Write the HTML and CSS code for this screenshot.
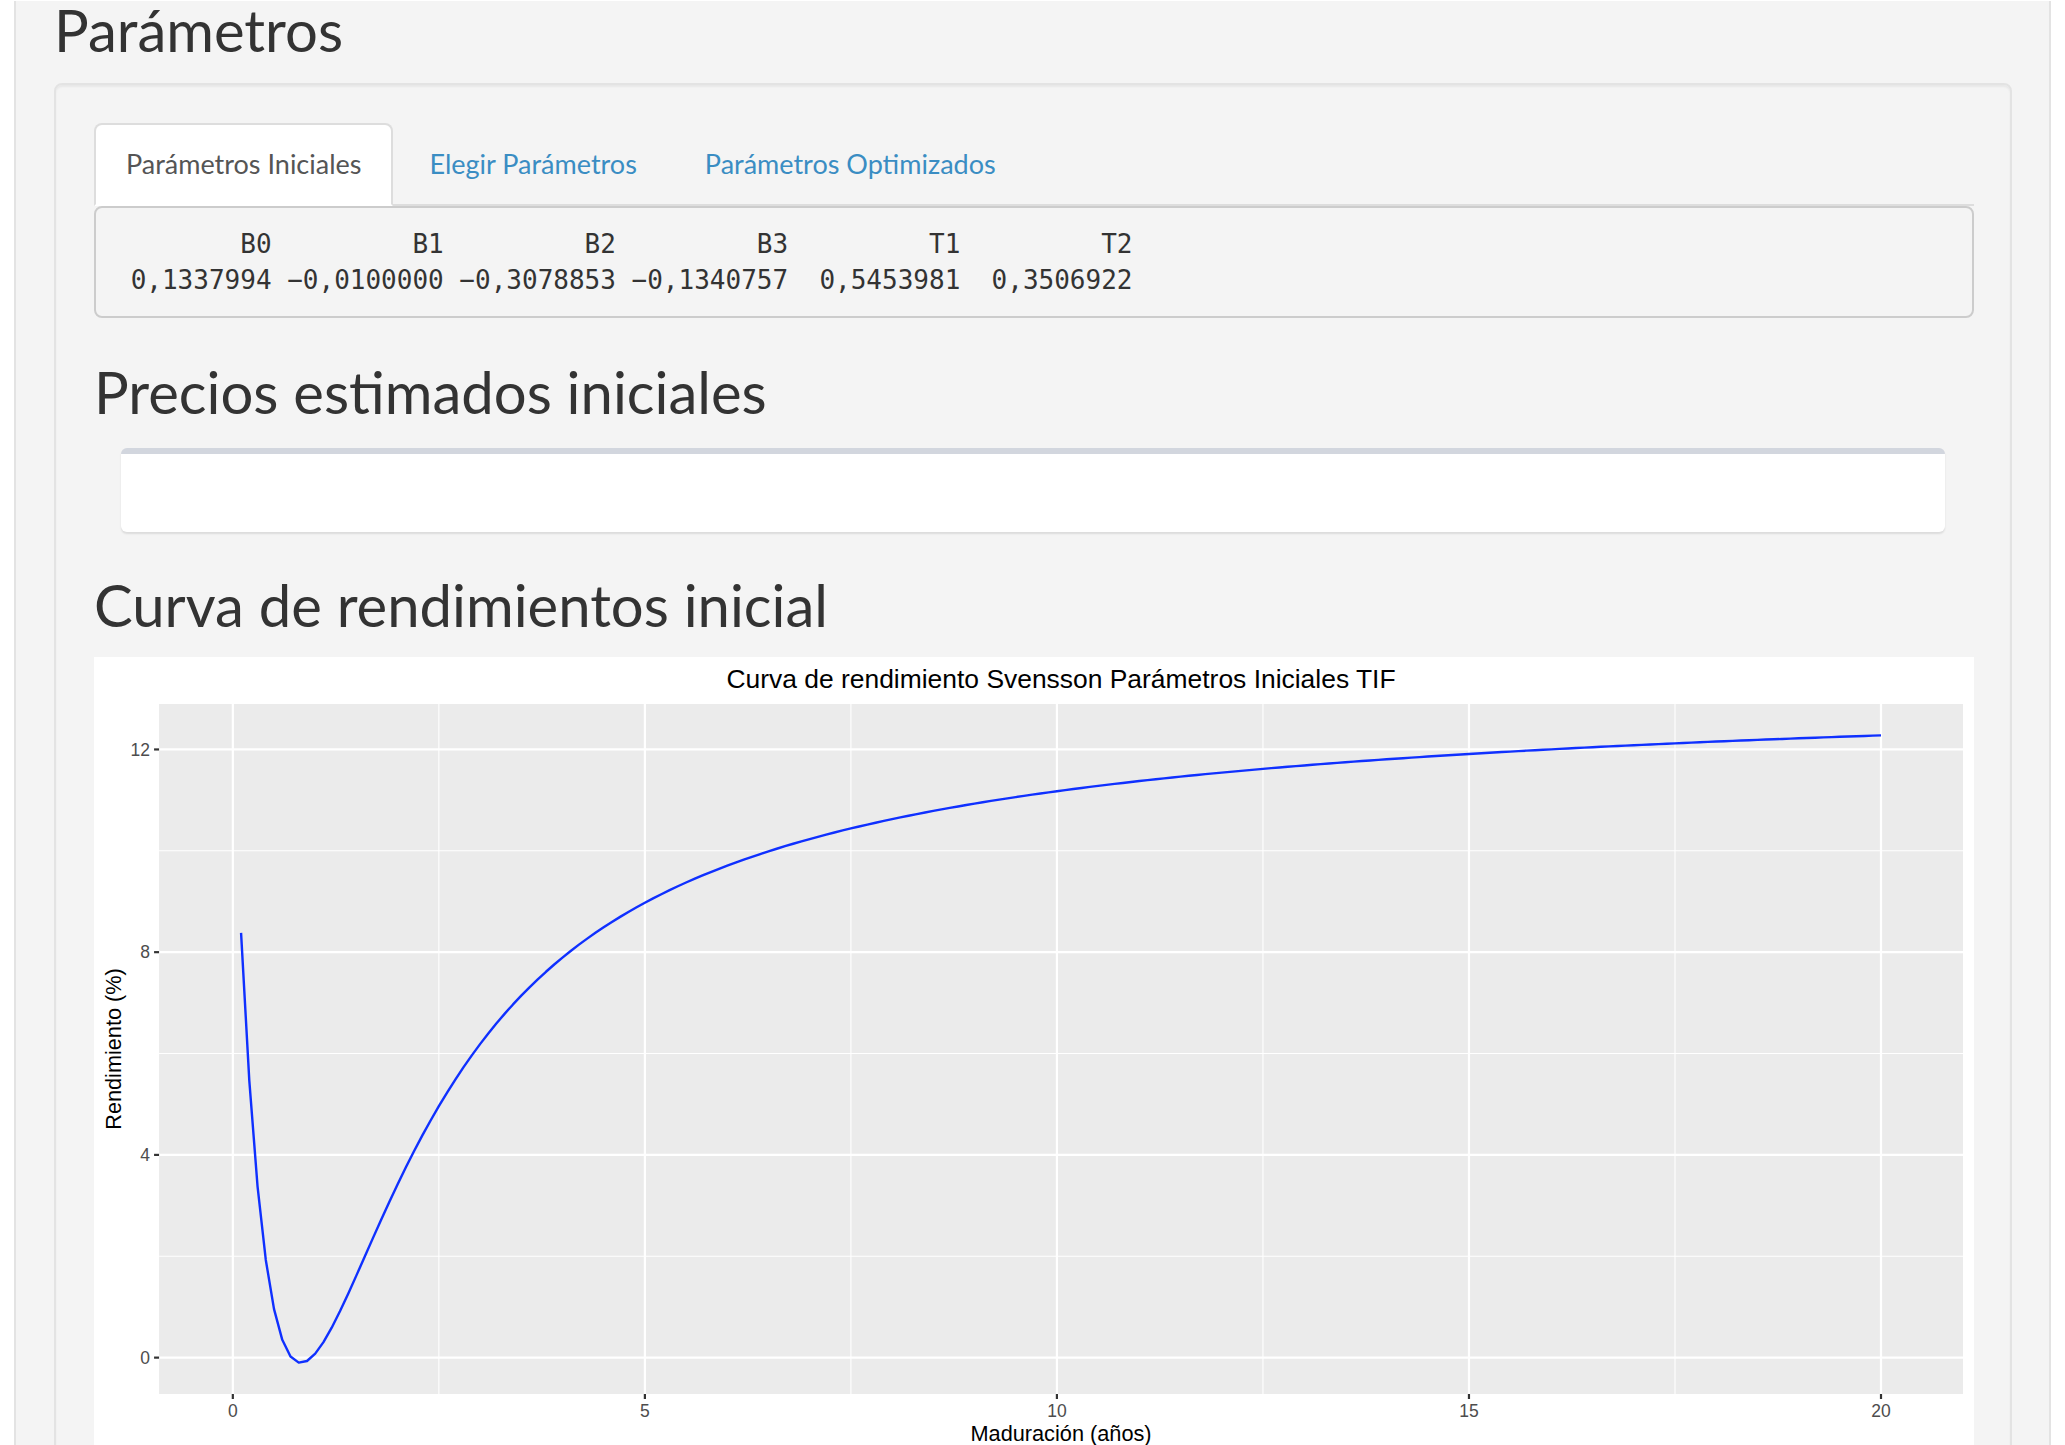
FILE: index.html
```html
<!DOCTYPE html>
<html lang="es">
<head>
<meta charset="utf-8">
<title>Parámetros</title>
<link rel="stylesheet" href="styles.css">
</head>
<body>
<div class="outer-well">
  <h1 class="page-title">Parámetros</h1>
  <div class="well">
    <ul class="nav-tabs">
      <li class="tab active"><a class="tab-link">Parámetros Iniciales</a></li>
      <li class="tab"><a class="tab-link">Elegir Parámetros</a></li>
      <li class="tab"><a class="tab-link">Parámetros Optimizados</a></li>
    </ul>
    <pre class="params">        B0         B1         B2         B3         T1         T2
 0,1337994 −0,0100000 −0,3078853 −0,1340757  0,5453981  0,3506922</pre>
    <h3 class="section-title">Precios estimados iniciales</h3>
    <div class="box"></div>
    <h3 class="section-title section-title-plot">Curva de rendimientos inicial</h3>
    <div class="plot">
      <svg class="plot-svg" viewBox="0 0 1878 800" preserveAspectRatio="none">
        <rect x="0" y="0" width="1878" height="800" fill="#ffffff"/>
        <rect x="65" y="47" width="1802" height="690" fill="#ebebeb"/>
        <g stroke="#ffffff" stroke-width="1.1">
          <line x1="65" x2="1867" y1="599.27" y2="599.27"/>
          <line x1="65" x2="1867" y1="396.54" y2="396.54"/>
          <line x1="65" x2="1867" y1="193.81" y2="193.81"/>
          <line x1="344.48" x2="344.48" y1="47" y2="737"/>
          <line x1="756.09" x2="756.09" y1="47" y2="737"/>
          <line x1="1167.70" x2="1167.70" y1="47" y2="737"/>
          <line x1="1579.30" x2="1579.30" y1="47" y2="737"/>
        </g>
        <g stroke="#ffffff" stroke-width="2.2">
          <line x1="65" x2="1867" y1="700.63" y2="700.63"/>
          <line x1="65" x2="1867" y1="497.90" y2="497.90"/>
          <line x1="65" x2="1867" y1="295.17" y2="295.17"/>
          <line x1="65" x2="1867" y1="92.45" y2="92.45"/>
          <line x1="138.68" x2="138.68" y1="47" y2="737"/>
          <line x1="550.29" x2="550.29" y1="47" y2="737"/>
          <line x1="961.89" x2="961.89" y1="47" y2="737"/>
          <line x1="1373.50" x2="1373.50" y1="47" y2="737"/>
          <line x1="1785.10" x2="1785.10" y1="47" y2="737"/>
        </g>
        <path id="curve" fill="none" stroke="#0f30ff" stroke-width="2.4" stroke-linejoin="round" d=""/>
        <g stroke="#333333" stroke-width="2.2">
          <line x1="60" x2="65" y1="700.63" y2="700.63"/>
          <line x1="60" x2="65" y1="497.90" y2="497.90"/>
          <line x1="60" x2="65" y1="295.17" y2="295.17"/>
          <line x1="60" x2="65" y1="92.45" y2="92.45"/>
          <line x1="138.68" x2="138.68" y1="737" y2="742"/>
          <line x1="550.29" x2="550.29" y1="737" y2="742"/>
          <line x1="961.89" x2="961.89" y1="737" y2="742"/>
          <line x1="1373.50" x2="1373.50" y1="737" y2="742"/>
          <line x1="1785.10" x2="1785.10" y1="737" y2="742"/>
        </g>
        <g class="axis-text" text-anchor="end">
          <text x="56" y="98.6">12</text>
          <text x="56" y="301.3">8</text>
          <text x="56" y="504">4</text>
          <text x="56" y="706.8">0</text>
        </g>
        <g class="axis-text" text-anchor="middle">
          <text x="138.68" y="760">0</text>
          <text x="550.29" y="760">5</text>
          <text x="961.89" y="760">10</text>
          <text x="1373.50" y="760">15</text>
          <text x="1785.10" y="760">20</text>
        </g>
        <text class="plot-title" x="966" y="31" text-anchor="middle">Curva de rendimiento Svensson Parámetros Iniciales TIF</text>
        <text class="axis-title" x="966" y="784" text-anchor="middle">Maduración (años)</text>
        <text class="axis-title" transform="translate(27 392) rotate(-90)" text-anchor="middle">Rendimiento (%)</text>
      </svg>
    </div>
  </div>
</div>
<script src="script.js"></script>
</body>
</html>
```

FILE: styles.css
```css
* {
  box-sizing: border-box;
}

html,
body {
  margin: 0;
  padding: 0;
}

body {
  background: #ffffff;
  font-family: Lato, "Open Sans", sans-serif;
  color: #333333;
}

.outer-well {
  margin: 0 14px;
  min-height: 1445px;
  padding: 0 37px 40px 38px;
  background: #f4f4f4;
  border: 2px solid #e3e3e3;
  border-top: none;
}

.page-title {
  margin: 1px 0 25px;
  font-size: 58px;
  line-height: 57px;
  font-weight: 400;
  color: #333333;
}

.well {
  padding: 38px 36px 38px 38px;
  background: #f4f4f4;
  border: 2px solid #e3e3e3;
  border-radius: 8px;
  box-shadow: inset 0 2px 2px rgba(0, 0, 0, 0.05);
}

.nav-tabs {
  display: flex;
  margin: 0;
  padding: 0;
  list-style: none;
  border-bottom: 2px solid #dddddd;
}

.tab {
  margin: 0 4px -2px 0;
}

.tab-link {
  display: block;
  padding: 19px 30px 20px;
  font-size: 27px;
  line-height: 40px;
  color: #3a8dc3;
  border: 2px solid transparent;
  border-radius: 8px 8px 0 0;
}

.tab.active .tab-link {
  color: #555555;
  background: #ffffff;
  border-color: #dddddd #dddddd transparent;
}

.params {
  margin: 0;
  padding: 18px 19px;
  font-family: "DejaVu Sans Mono", monospace;
  font-size: 26px;
  line-height: 36px;
  color: #333333;
  background: #f4f4f4;
  border: 2px solid #cccccc;
  border-radius: 8px;
}

.section-title {
  margin: 42px 0 25px;
  font-size: 58px;
  line-height: 63px;
  font-weight: 400;
  color: #333333;
}

.section-title-plot {
  margin-top: 41px;
  margin-bottom: 21px;
}

.box {
  height: 84px;
  margin: 0 29px 0 27px;
  background: #ffffff;
  border-top: 6px solid #d2d6de;
  border-radius: 6px;
  box-shadow: 0 2px 2px rgba(0, 0, 0, 0.1);
}

.plot {
  background: #ffffff;
}

.plot-svg {
  display: block;
  width: 100%;
  height: 800px;
}

.axis-text {
  font-family: "Liberation Sans", Arial, sans-serif;
  font-size: 17.5px;
  fill: #4d4d4d;
}

.plot-title {
  font-family: "Liberation Sans", Arial, sans-serif;
  font-size: 26.4px;
  fill: #000000;
}

.axis-title {
  font-family: "Liberation Sans", Arial, sans-serif;
  font-size: 21.7px;
  fill: #000000;
}
```

FILE: script.js
```js
(function () {
  var B0 = 0.1337994, B1 = -0.0100000, B2 = -0.3078853, B3 = -0.1340757;
  var T1 = 0.5453981, T2 = 0.3506922;

  function svensson(t) {
    var a = t / T1, b = t / T2;
    var ea = Math.exp(-a), eb = Math.exp(-b);
    var g = (1 - ea) / a, h = (1 - eb) / b;
    return 100 * (B0 + B1 * g + B2 * (g - ea) + B3 * (h - eb));
  }

  var pts = [];
  for (var i = 1; i <= 200; i++) {
    var t = i / 10;
    pts.push([t, svensson(t)]);
  }

  var xmin = 0.1, xmax = 20;
  var ymin = Infinity, ymax = -Infinity;
  pts.forEach(function (p) {
    if (p[1] < ymin) ymin = p[1];
    if (p[1] > ymax) ymax = p[1];
  });
  var xr = xmax - xmin, yr = ymax - ymin;
  var xlo = xmin - 0.05 * xr, xhi = xmax + 0.05 * xr;
  var ylo = ymin - 0.05 * yr, yhi = ymax + 0.05 * yr;
  var px0 = 65, px1 = 1867, py0 = 47, py1 = 737;

  function sx(x) { return px0 + (x - xlo) / (xhi - xlo) * (px1 - px0); }
  function sy(y) { return py1 - (y - ylo) / (yhi - ylo) * (py1 - py0); }

  var d = pts.map(function (p, k) {
    return (k ? "L" : "M") + sx(p[0]).toFixed(2) + " " + sy(p[1]).toFixed(2);
  }).join(" ");
  document.getElementById("curve").setAttribute("d", d);
})();
```
